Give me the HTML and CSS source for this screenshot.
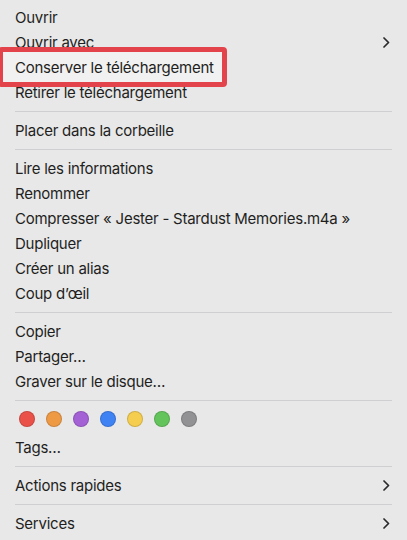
FILE: index.html
```html
<!DOCTYPE html>
<html lang="fr">
<head>
<meta charset="UTF-8">
<meta name="viewport" content="width=device-width, initial-scale=1.0">
<title>Menu contextuel</title>
<link rel="stylesheet" href="styles.css">
</head>
<body>

<div class="menu">
  <div class="item">Ouvrir</div>
  <div class="item">Ouvrir avec
    <svg class="chevron" width="7" height="11" viewBox="0 0 7 11"><polyline points="1,1 5.5,5.5 1,10" /></svg>
  </div>
  <div class="item marked"><span>Conserver le téléchargement</span></div>
  <div class="item">Retirer le téléchargement</div>
  <div class="sep"></div>
  <div class="item">Placer dans la corbeille</div>
  <div class="sep"></div>
  <div class="item">Lire les informations</div>
  <div class="item">Renommer</div>
  <div class="item">Compresser « Jester - Stardust Memories.m4a »</div>
  <div class="item">Dupliquer</div>
  <div class="item">Créer un alias</div>
  <div class="item">Coup d’œil</div>
  <div class="sep"></div>
  <div class="item">Copier</div>
  <div class="item">Partager…</div>
  <div class="item">Graver sur le disque…</div>
  <div class="sep"></div>
  <div class="tags">
    <span class="dot red"></span>
    <span class="dot orange"></span>
    <span class="dot purple"></span>
    <span class="dot blue"></span>
    <span class="dot yellow"></span>
    <span class="dot green"></span>
    <span class="dot gray"></span>
  </div>
  <div class="item tags-label">Tags…</div>
  <div class="sep"></div>
  <div class="item">Actions rapides
    <svg class="chevron" width="7" height="11" viewBox="0 0 7 11"><polyline points="1,1 5.5,5.5 1,10" /></svg>
  </div>
  <div class="sep"></div>
  <div class="item">Services
    <svg class="chevron" width="7" height="11" viewBox="0 0 7 11"><polyline points="1,1 5.5,5.5 1,10" /></svg>
  </div>
</div>

</body>
</html>
```

FILE: styles.css
```css
body {
  margin: 0;
  background: #e8e8e9;
  font-family: Inter, "Liberation Sans", sans-serif;
  color: #1f1f21;
  overflow: hidden;
}
.menu {
  padding-top: 5px;
}
.item {
  height: 25px;
  display: flex;
  align-items: center;
  justify-content: space-between;
  padding: 0 17px 0 15px;
  font-size: 15px;
  letter-spacing: -0.25px;
  white-space: nowrap;
}
.chevron {
  fill: none;
  stroke: #2a2a2c;
  stroke-width: 1.7;
  stroke-linecap: round;
  stroke-linejoin: round;
}
.sep {
  height: 13px;
  display: flex;
  align-items: center;
  padding: 0 15px;
}
.sep::after {
  content: '';
  flex: 1;
  height: 1px;
  background: #cfcfd1;
}
.marked {
  position: relative;
  z-index: 1;
}
.marked::before {
  content: '';
  position: absolute;
  top: -8px;
  bottom: -7px;
  left: -2px;
  width: 219px;
  background: #f1f1f1;
  border: 5px solid #e3444b;
  border-radius: 4px;
  z-index: -1;
}
.tags {
  height: 24px;
  display: flex;
  align-items: center;
  gap: 11px;
  padding-left: 19px;
}
.dot {
  width: 16px;
  height: 16px;
  border-radius: 50%;
  box-sizing: border-box;
  border: 1px solid rgba(0, 0, 0, 0.15);
}
.red { background: #ea5249; }
.orange { background: #ee9a45; }
.purple { background: #a461d5; }
.blue { background: #3e82f4; }
.yellow { background: #f5cd4f; }
.green { background: #64c45c; }
.gray { background: #929294; }
.tags-label {
  margin-top: 4px;
}
```
